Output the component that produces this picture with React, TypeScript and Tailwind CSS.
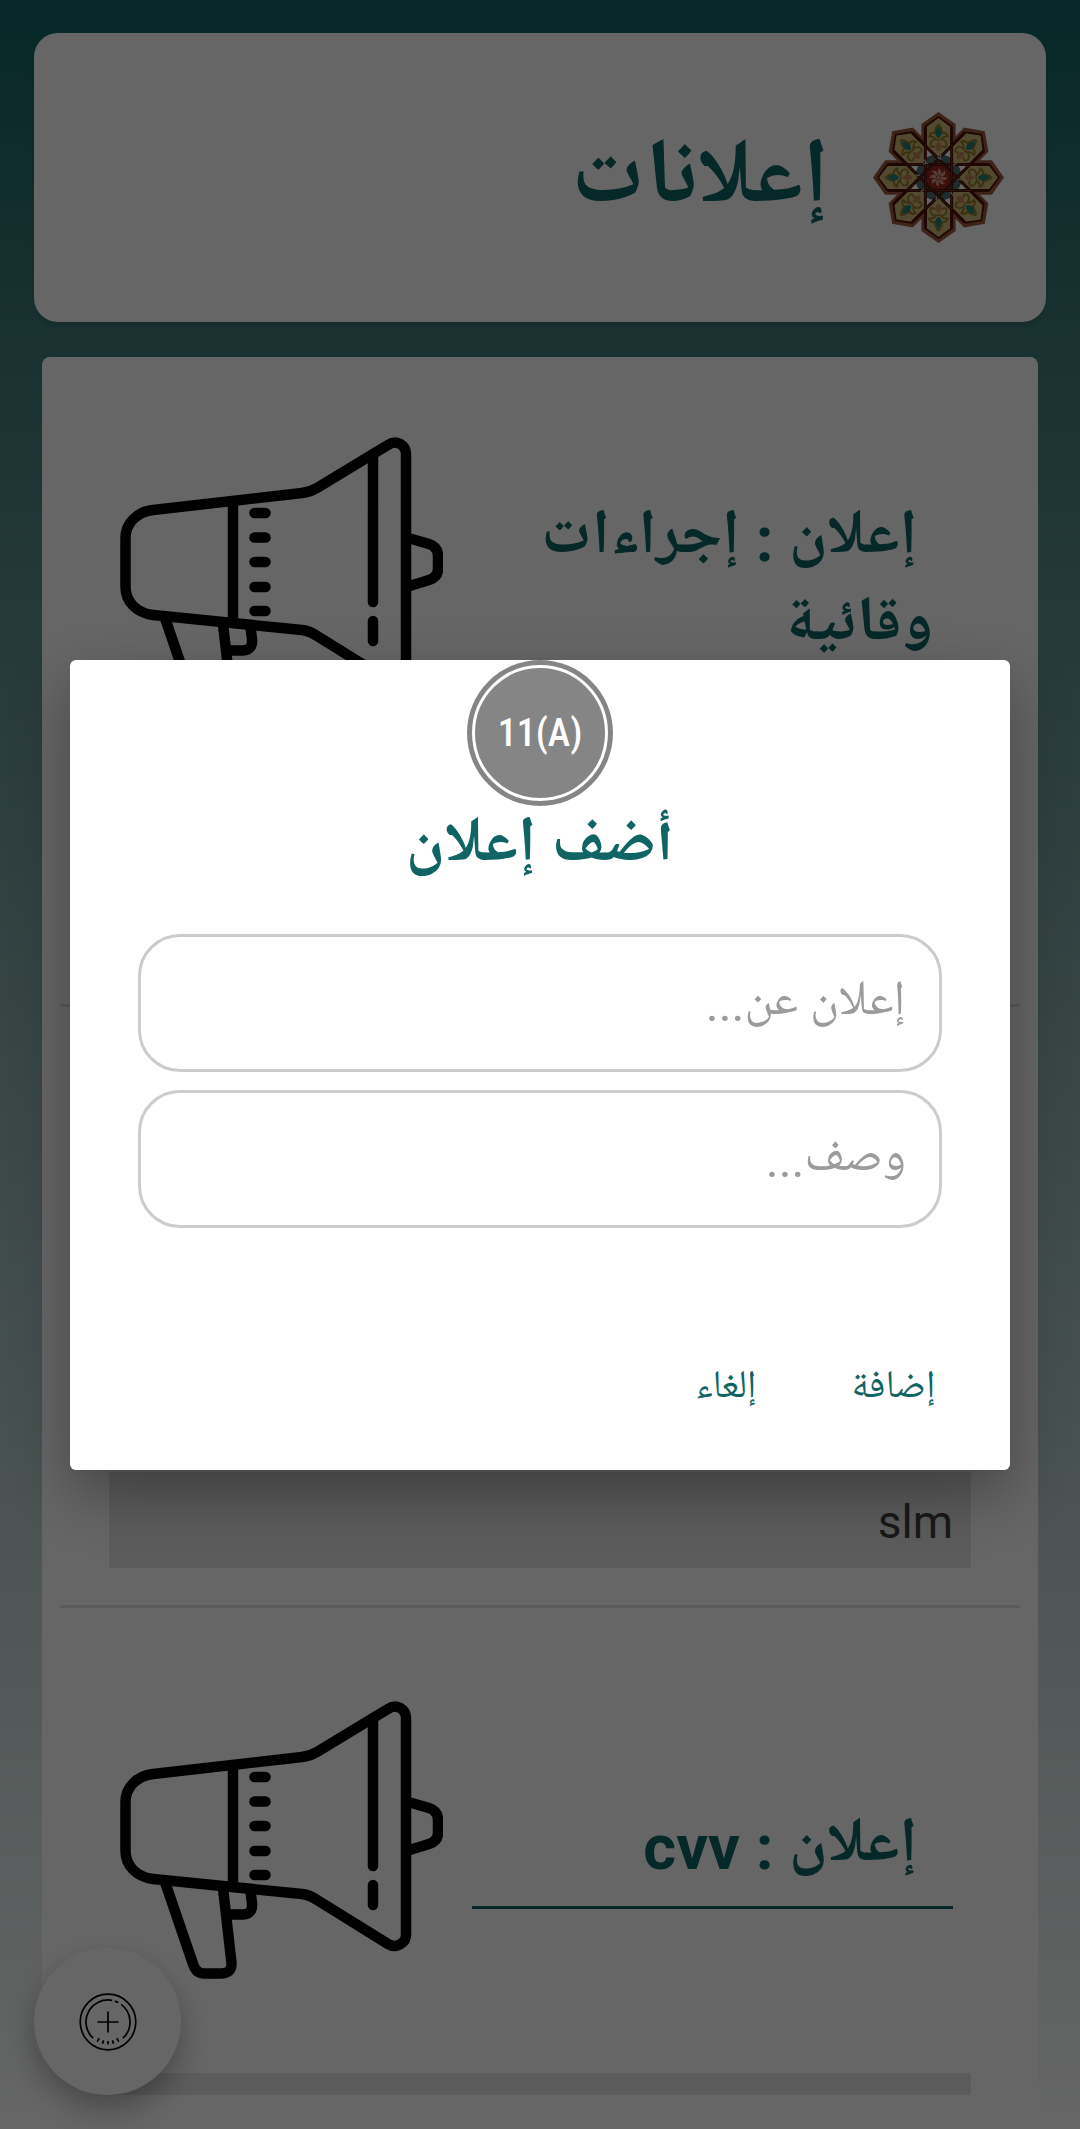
import React from "react";

type Announcement = {
  id: number;
  title?: string;
  body?: string;
  bodyClass?: string;
};

const announcements: Announcement[] = [
  { id: 1, title: "إعلان : إجراءات وقائية", bodyClass: "h-[158px]" },
  { id: 2, body: "slm" },
  { id: 3, title: "إعلان : cvv" },
];

const turns = [0, 45, 90, 135, 180, 225, 270, 315];

function Rosette() {
  return (
    <svg viewBox="-65 -65 130 130" className="size-[131px] shrink-0" aria-hidden="true">
      {turns.map((a) => (
        <polygon key={a} transform={`rotate(${a})`} points="0,-65 17,-53 17,-36 0,-16 -17,-36 -17,-53" fill="#9c5a3c" />
      ))}
      {turns.map((a) => (
        <polygon key={a} transform={`rotate(${a})`} points="0,-61 14,-51 14,-34 0,-16 -14,-34 -14,-51" fill="#4a0f08" />
      ))}
      <circle r="23" fill="#4f6e6e" />
      {turns.map((a) => (
        <g key={a} transform={`rotate(${a})`}>
          <polygon points="0,-59 12,-50 12,-31 0,-20 -12,-31 -12,-50" fill="#cbb878" />
          <path d="M0-53C-3-49-4-47-3-44C-6-45-8-44-9-41C-6-41-4-40-3-38M0-53C3-49 4-47 3-44C6-45 8-44 9-41C6-41 4-40 3-38" fill="none" stroke="#94782d" strokeWidth="2" />
          <path d="M0-37C-3-39-8-37-8-33C-8-30-4-29-4-32M0-37C3-39 8-37 8-33C8-30 4-29 4-32" fill="none" stroke="#94782d" strokeWidth="1.8" />
          <path d="M0-51C4-46 4-41 0-39C-4-41-4-46 0-51Z" fill="#23806e" />
          <path d="M0-36C4-32 4-28 0-26C-4-28-4-32 0-36Z" fill="#c08058" />
        </g>
      ))}
      {turns.map((a) => (
        <g key={a} transform={`rotate(${a})`}>
          <path d="M-50-13H50" stroke="#4a0f08" strokeWidth="3" />
          <path d="M-32-13H32" stroke="#8a5030" strokeWidth="0.6" />
          <path d="M7-19l2 3 2-4" stroke="#b8cccb" strokeWidth="1.2" fill="none" transform="rotate(22)" />
        </g>
      ))}
      <polygon points="-5,-11.5 5,-11.5 11.5,-5 11.5,5 5,11.5 -5,11.5 -11.5,5 -11.5,-5" fill="#9a2420" />
      {turns.map((a) => (
        <path key={a} transform={`rotate(${a})`} d="M0-2C-2-5 1-6-1-9C3-8 4-5 1-2" fill="#d09880" />
      ))}
      <circle r="1.6" fill="#d09880" />
    </svg>
  );
}

function Megaphone() {
  return (
    <svg viewBox="0 0 323 278" className="h-[278px] w-[323px] shrink-0" fill="none" stroke="#000" strokeWidth="10.5" strokeLinecap="round" aria-hidden="true">
      <path d="M33 73L182 56Q190 55 197 51L268 8C276 2 286 8 286 17V234C286 242 276 248 268 243L197 199Q190 194 182 193L33 178C16 176 5.500 164 5.500 150V101C5.500 87 16 75 33 73Z" />
      <path d="M113 65V183M253 20V165M253 184V204" />
      <path d="M134.500 76H145.500M134.500 100.500H145.500M134.500 125H145.500M134.500 150H145.500M134.500 174H145.500" />
      <path strokeLinecap="butt" d="M288 101L309 107Q318 110 318 119V132Q318 140 309 143L288 149.500" />
      <path strokeLinecap="butt" d="M45 181L73 263Q76 272.500 84 272.500H101Q112 272.500 111.500 262L103 187" />
      <path strokeLinecap="butt" d="M109 213.500H123Q133 213 132 202L130.500 190" />
    </svg>
  );
}

function AddIcon() {
  return (
    <svg viewBox="-29 -29 58 58" className="size-[58px]" fill="none" stroke="#000" strokeWidth="1.7" aria-hidden="true">
      <circle r="27.800" />
      <path d="M-10.500 0H10.500M0-10.500V10.500" />
      <path d="M4.200-21.600A22 22 0 0 0-14.900 16.200" />
      <path d="M6.800-20.900A22 22 0 0 1 10.300-19.400" />
      <path d="M13.200-17.600A22 22 0 0 1 14.900 16.200" />
      <path d="M-8.800 16.300L-10.800 19.600M-4.500 18.200L-5.500 21.800M0 19V22.600M4.500 18.200L5.500 21.800M8.800 16.300L10.800 19.600" />
    </svg>
  );
}

function Badge() {
  return (
    <div className="flex size-[146px] items-center justify-center rounded-full bg-[#858585] p-[5px]">
      <div className="flex size-full items-center justify-center rounded-full border-3 border-white">
        <span dir="ltr" className="font-['Roboto_Condensed','Liberation_Sans_Narrow','Roboto',sans-serif] text-[38px] leading-none font-medium text-white">
          11(A)
        </span>
      </div>
    </div>
  );
}

function AnnouncementItem({ item }: { item: Announcement }) {
  return (
    <li>
      <article className="pb-[37px]">
        <div className="flex items-center gap-[29px] pr-[85px] pl-[78px]">
          <div className="flex-1 border-b-3 border-[#116464] pt-[32px] pr-[20px] pb-[15px]">
            {item.title && (
              <h2 className="text-[63px] leading-[87px] font-bold text-[#116464]">&nbsp;{item.title}</h2>
            )}
          </div>
          <Megaphone />
        </div>
        <div className={`mx-[67px] mt-[94px] bg-[#e6e6e6] px-[18px] pt-[13px] pb-[9px] text-[46px] leading-[74px] text-[#404040] ${item.bodyClass ?? ""}`}>
          {item.body}
        </div>
      </article>
    </li>
  );
}

function TextField({ label }: { label: string }) {
  return (
    <input
      type="text"
      aria-label={label}
      placeholder={label}
      className="h-[138px] w-full rounded-[42px] border-3 border-[#cccccc] bg-white px-[33px] pt-[3px] text-[49px] text-[#404040] outline-none placeholder:text-[#9b9b9b]"
    />
  );
}

export default function App() {
  return (
    <div
      dir="rtl"
      lang="ar"
      className="relative flex h-screen flex-col overflow-hidden bg-linear-to-b from-[#0f6464] to-white font-['Roboto','Noto_Naskh_Arabic_UI','Noto_Naskh_Arabic','DejaVu_Sans',sans-serif]"
    >
      <header className="mx-[34px] mt-[33px] flex items-center gap-[44px] rounded-[24px] bg-white px-[42px] py-[79px] shadow-md">
        <Rosette />
        <h1 className="pt-[10px] text-[92px] leading-[108px] font-bold text-[#116464]">إعلانات</h1>
      </header>

      <main className="mx-[42px] mt-[35px] min-h-0 flex-1 overflow-hidden rounded-t-[8px] bg-white pt-[80px]">
        <ul className="flex flex-col">
          {announcements.map((item, i) => (
            <React.Fragment key={item.id}>
              {i > 0 && <li role="separator" className="mx-[18px] mb-[93px] h-[3px] bg-[#e2e2e2]" />}
              <AnnouncementItem item={item} />
            </React.Fragment>
          ))}
        </ul>
      </main>

      <button
        type="button"
        aria-label="أضف إعلان"
        className="absolute bottom-[34px] left-[34px] flex size-[147px] items-center justify-center rounded-full bg-white shadow-[0_14px_30px_rgba(0,0,0,0.3)]"
      >
        <AddIcon />
      </button>

      <div className="absolute inset-0 flex items-center justify-center bg-black/60 px-[70px]">
        <section
          role="dialog"
          aria-modal="true"
          aria-labelledby="dialog-title"
          className="w-full rounded-[6px] bg-white shadow-[0_24px_60px_rgba(0,0,0,0.32)]"
        >
          <form className="flex flex-col items-center px-[68px] pb-[30px]">
            <Badge />
            <h2 id="dialog-title" className="text-[64px] leading-[84px] font-bold text-[#116464]">
              أضف إعلان
            </h2>
            <div className="mt-[44px] flex w-full flex-col gap-[18px]">
              <TextField label="إعلان عن..." />
              <TextField label="وصف..." />
            </div>
            <div className="mt-[112px] flex w-full gap-[82px]">
              <button type="button" className="h-[100px] px-[6px] text-[39px] text-[#116464]">إضافة</button>
              <button type="button" className="h-[100px] px-[6px] text-[39px] text-[#116464]">إلغاء</button>
            </div>
          </form>
        </section>
      </div>
    </div>
  );
}
